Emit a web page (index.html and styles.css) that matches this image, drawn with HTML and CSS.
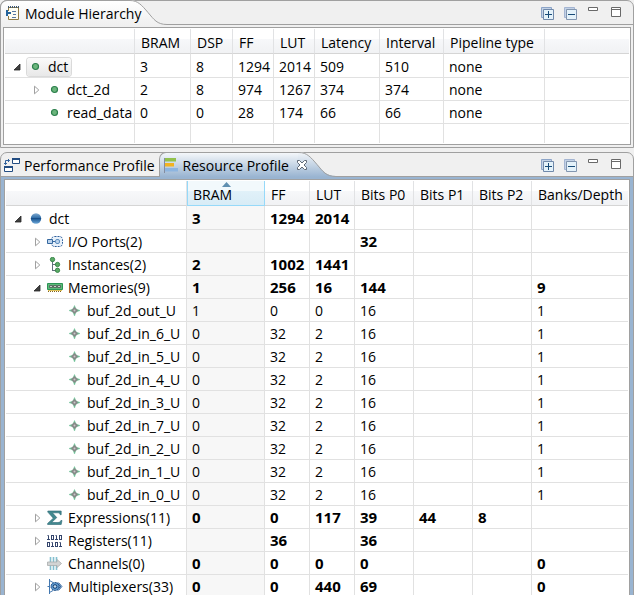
FILE: index.html
```html
<!DOCTYPE html>
<html lang="en">
<head>
<meta charset="utf-8">
<title>Resource Profile</title>
<link rel="stylesheet" href="styles.css">
</head>
<body>
<svg class="sprite" aria-hidden="true">
  <defs>
    <linearGradient id="gTab" x1="0" y1="0" x2="0" y2="1"><stop offset="0" stop-color="#fff"/><stop offset="1" stop-color="#f0f0f0"/></linearGradient>
    <linearGradient id="gActive" x1="0" y1="0" x2="0" y2="1"><stop offset="0" stop-color="#f4f7fa"/><stop offset="1" stop-color="#99b4d1"/></linearGradient>
    <linearGradient id="gBall" x1="0" y1="0" x2="0" y2="1"><stop offset="0" stop-color="#7fa9cf"/><stop offset=".45" stop-color="#2f6ea8"/><stop offset=".55" stop-color="#1f5c98"/><stop offset="1" stop-color="#6fa8d8"/></linearGradient>
  </defs>
  <symbol id="open" viewBox="0 0 16 16"><path d="M9 5v6H3z" fill="#404040" stroke="#262626" stroke-width=".8"/></symbol>
  <symbol id="closed" viewBox="0 0 16 16"><path d="M4.5 4.2v7.6L8.800 8z" fill="#fff" stroke="#a0a0a0"/></symbol>
  <symbol id="dot" viewBox="0 0 16 16"><circle cx="8.500" cy="7.500" r="3" fill="#6bb57c" stroke="#2c7f4c" stroke-width="1.200"/></symbol>
  <symbol id="ball" viewBox="0 0 16 16"><circle cx="8" cy="7.500" r="5.200" fill="url(#gBall)"/><path d="M3 7.500h10" stroke="#184e88"/></symbol>
  <symbol id="io" viewBox="0 0 16 16"><rect x="4.500" y="2.500" width="11" height="10" rx="3" fill="#e8f1fa" stroke="#2f5f9c" stroke-dasharray="2 1"/><path d="M.5 5.500h5v4h-5zM6 7.500h2" fill="#bcd4ee" stroke="#35689f"/><rect x="8.500" y="5.500" width="4" height="4" rx="1.500" fill="#bcd4ee" stroke="#5f8fc0"/></symbol>
  <symbol id="inst" viewBox="0 0 16 16"><path d="M5.500 3v11M5.500 7.500h5M5.500 13.500h5" fill="none" stroke="#62707c"/><g fill="#5bab66" stroke="#2b7a3e" stroke-width=".8"><circle cx="5.500" cy="2.500" r="2.200"/><circle cx="10.500" cy="7.500" r="2.200"/><circle cx="10.500" cy="13.300" r="2.200"/></g></symbol>
  <symbol id="mem" viewBox="0 0 16 16"><path d="M.5 3.500h15v6H.5z" fill="#5cba7a" stroke="#2c9455"/><path d="M2.500 5.500h3v2h-3zM6.500 5.500h3v2h-3zM10.500 5.500h3v2h-3z" fill="#c8ccc9" stroke="#4a5650" stroke-width=".8"/><path d="M1 10.500h14" stroke="#e0c25c"/><path d="M1 11.500h14" stroke="#80641c" stroke-dasharray="1 1"/></symbol>
  <symbol id="spark" viewBox="0 0 16 16"><path d="M8.500 2.500 10 6l4 1.500L10 9l-1.500 4L7 9 3 7.500 7 6z" fill="#6fc096" stroke="#6fc096" stroke-width=".5"/><path d="M8.500 4 12 7.500 8.500 11 5 7.500z" fill="#888"/><circle cx="8.500" cy="7.500" r="1" fill="#c8c8c8"/></symbol>
  <symbol id="sigma" viewBox="0 0 16 16"><path d="M.8 1h13.400v3.700h-1C13 3.400 12 2.800 10.500 2.800H5.400L9.800 7.600 4.600 12.500h6.300c1.700 0 2.500-.7 3-2h1.100l-.8 4H.6v-1.100L6.300 8.200.8 2.100z" fill="#42898f" stroke="#2b6674" stroke-width=".6"/></symbol>
  <symbol id="reg" viewBox="0 0 16 16"><g fill="none" stroke="#34456c"><path d="M.5 2.500h1V7M0 6.500h3M8.500 2.500h1V7M8 6.500h3"/><rect x="4.500" y="2.500" width="2" height="4"/><rect x="12.500" y="2.500" width="2" height="4"/><path d="M4.500 9.500h1V14M4 13.500h3M12.500 9.500h1V14M12 13.500h3"/><rect x=".5" y="9.500" width="2" height="4"/><rect x="8.500" y="9.500" width="2" height="4"/></g></symbol>
  <symbol id="chan" viewBox="0 0 16 16"><path d="M3.500 1v13M6.500 1v13M9.500 1v13" stroke="#84c0d0" stroke-width="1.600"/><path d="M.5 6h9.500V3.500L14.500 7.500 10 11.500V9.500H.5z" fill="#d2d4d4" stroke="#a8acac" stroke-width=".8"/></symbol>
  <symbol id="mux" viewBox="0 0 16 16"><path d="M2.500 0v15M2.500 1.500 6 3.500M2.500 13.500 6 11.500" fill="none" stroke="#4378b0"/><path d="M.5 7.500h2" stroke="#4378b0"/><path d="M10 4h2l3 3.500-3 3.500h-2z" fill="#a9c9e6" stroke="#2f6199" stroke-width=".8"/><circle cx="8" cy="7.500" r="4" fill="#5e97cc" stroke="#1c4c84" stroke-dasharray="2 .6"/><circle cx="8" cy="7.500" r="1.800" fill="#c9deef" stroke="#123d70"/><path d="m12 5.500 1.500 2-1.500 2" fill="none" stroke="#174a85"/></symbol>
  <symbol id="plus" viewBox="0 0 16 16"><path d="M1.500.5h10v10h-10z" fill="#c3d2e6" stroke="#8da5c8"/><path d="M3.500 2.500h10v10h-10z" fill="#e4f2fa" stroke="#7089aa"/><path d="M5 7.500h7M8.500 4v7" stroke="#174b78"/></symbol>
  <symbol id="minus" viewBox="0 0 16 16"><path d="M1.500.5h10v10h-10z" fill="#c3d2e6" stroke="#a4b5d2"/><path d="M3.500 2.500h10v10h-10z" fill="#e4f2fa" stroke="#8296b0"/><path d="M5 7.500h7" stroke="#174b78"/></symbol>
  <symbol id="min" viewBox="0 0 16 16"><path d="M2.500.5h9v3h-9z" fill="#fff" stroke="#696969"/></symbol>
  <symbol id="max" viewBox="0 0 16 16"><path d="M2.500.5h9v9h-9zM2 2.500h10" fill="#fff" stroke="#696969"/></symbol>
  <symbol id="hier" viewBox="0 0 16 16"><path d="M3.500 5V1.500h10v12h-10V10" fill="#fffef2" stroke="#917b42"/><path d="M3.500 0v2M5.500 0v2M7.500 0v2M9.500 0v2M11.500 0v2M13.500 0v2" stroke="#3c5878"/><path d="M7 5.500h4M8 8.500h3M7 11.500h4" stroke="#5878a0"/><path d="M2 4v6M2 7h4" fill="none" stroke="#26649b" stroke-width="2"/></symbol>
  <symbol id="perf" viewBox="0 0 16 16"><path d="M8.500.5h7v5h-7zM.5 8.500h8v5h-8z" fill="#fff" stroke="#234d82"/><path d="M8 1h8M0 9h9" stroke="#234d82" stroke-width="2"/><path d="M1.500 6.500v-4h4M0 5l1.500 1.500L3 5M4 1l1.500 1.500L4 4" fill="none" stroke="#30619c"/></symbol>
  <symbol id="res" viewBox="0 0 16 16"><path d="M.5 0v15" stroke="#848da0"/><path d="M1 0h11v3.500H1z" fill="#92c14c"/><path d="M1 5h9v3.500H1z" fill="#f2b321"/><path d="M1 10h13v3.500H1z" fill="#8db5e0"/></symbol>
  <symbol id="x" viewBox="0 0 16 16"><path d="m3.500 2.500 2 0L8 5l2.500-2.500 2 0 0 2L10 7l2.500 2.500v2h-2L8 9l-2.500 2.500h-2v-2L6 7 3.500 4.500z" fill="#fff" stroke="#5f6976"/></symbol>
</svg>

<section class="panel hierarchy">
  <header class="strip">
    <div class="tabs" role="tablist">
      <button class="tab current" role="tab" aria-selected="true">
        <svg class="curve" viewBox="0 0 40 25"><path d="M0 0h1c8 0 12 5 18 12s9 12 19 12h2v1H0z" fill="url(#gTab)"/><path d="M0 .5h1c8 0 12 5 18 12s9 12 19 12h2" fill="none" stroke="#a0a0a0"/></svg>
        <svg class="icon"><use href="#hier"/></svg><span>Module Hierarchy</span>
      </button>
    </div>
    <div class="tools">
      <button aria-label="Expand all"><svg class="icon"><use href="#plus"/></svg></button>
      <button aria-label="Collapse all"><svg class="icon"><use href="#minus"/></svg></button>
      <button aria-label="Minimize"><svg class="icon"><use href="#min"/></svg></button>
      <button aria-label="Maximize"><svg class="icon"><use href="#max"/></svg></button>
    </div>
  </header>
  <div class="body"><div class="frame">
    <table>
      <colgroup><col class="w130"><col class="w56"><col class="w42"><col class="w41"><col class="w41"><col class="w65"><col class="w64"><col class="w101"><col></colgroup>
      <thead><tr><th></th><th>BRAM</th><th>DSP</th><th>FF</th><th>LUT</th><th>Latency</th><th>Interval</th><th>Pipeline type</th><th></th></tr></thead>
      <tbody>
        <tr><td><div class="node"><button class="twisty" aria-label="Collapse"><svg class="icon"><use href="#open"/></svg></button><span class="item selected"><svg class="icon"><use href="#dot"/></svg>dct</span></div></td><td>3</td><td>8</td><td>1294</td><td>2014</td><td>509</td><td>510</td><td>none</td><td></td></tr>
        <tr><td><div class="node level1"><button class="twisty" aria-label="Expand"><svg class="icon"><use href="#closed"/></svg></button><span class="item"><svg class="icon"><use href="#dot"/></svg>dct_2d</span></div></td><td>2</td><td>8</td><td>974</td><td>1267</td><td>374</td><td>374</td><td>none</td><td></td></tr>
        <tr><td><div class="node level1"><span class="twisty"></span><span class="item"><svg class="icon"><use href="#dot"/></svg>read_data</span></div></td><td>0</td><td>0</td><td>28</td><td>174</td><td>66</td><td>66</td><td>none</td><td></td></tr>
        <tr class="filler"><td></td><td></td><td></td><td></td><td></td><td></td><td></td><td></td><td></td></tr>
      </tbody>
    </table>
  </div></div>
</section>

<section class="panel profile">
  <header class="strip">
    <div class="tabs" role="tablist">
      <button class="tab" role="tab" aria-selected="false"><svg class="icon"><use href="#perf"/></svg><span>Performance Profile</span></button>
      <button class="tab current" role="tab" aria-selected="true">
        <svg class="curve" viewBox="0 0 40 25"><path d="M0 0h1c8 0 12 5 18 12s9 12 19 12h2v1H0z" fill="url(#gActive)"/><path d="M0 .5h1c8 0 12 5 18 12s9 12 19 12h2" fill="none" stroke="#a0a0a0"/></svg>
        <svg class="icon"><use href="#res"/></svg><span>Resource Profile</span><svg class="icon close"><use href="#x"/></svg>
      </button>
    </div>
    <div class="tools">
      <button aria-label="Expand all"><svg class="icon"><use href="#plus"/></svg></button>
      <button aria-label="Collapse all"><svg class="icon"><use href="#minus"/></svg></button>
      <button aria-label="Minimize"><svg class="icon"><use href="#min"/></svg></button>
      <button aria-label="Maximize"><svg class="icon"><use href="#max"/></svg></button>
    </div>
  </header>
  <div class="body"><div class="frame">
    <table>
      <colgroup><col class="w181"><col class="w78"><col class="w45"><col class="w45"><col class="w59"><col class="w59"><col class="w59"><col></colgroup>
      <thead><tr><th></th><th class="sorted" aria-sort="ascending">BRAM<svg class="arrow" viewBox="0 0 9 5"><path d="M0 5 4.500 0 9 5z" fill="#5f8fb0"/></svg></th><th>FF</th><th>LUT</th><th>Bits P0</th><th>Bits P1</th><th>Bits P2</th><th>Banks/Depth</th></tr></thead>
      <tbody>
        <tr class="total"><td><div class="node"><button class="twisty" aria-label="Collapse"><svg class="icon"><use href="#open"/></svg></button><span class="item"><svg class="icon"><use href="#ball"/></svg>dct</span></div></td><td>3</td><td>1294</td><td>2014</td><td></td><td></td><td></td><td></td></tr>
        <tr class="total"><td><div class="node level1"><button class="twisty" aria-label="Expand"><svg class="icon"><use href="#closed"/></svg></button><span class="item"><svg class="icon"><use href="#io"/></svg>I/O Ports(2)</span></div></td><td></td><td></td><td></td><td>32</td><td></td><td></td><td></td></tr>
        <tr class="total"><td><div class="node level1"><button class="twisty" aria-label="Expand"><svg class="icon"><use href="#closed"/></svg></button><span class="item"><svg class="icon"><use href="#inst"/></svg>Instances(2)</span></div></td><td>2</td><td>1002</td><td>1441</td><td></td><td></td><td></td><td></td></tr>
        <tr class="total"><td><div class="node level1"><button class="twisty" aria-label="Collapse"><svg class="icon"><use href="#open"/></svg></button><span class="item"><svg class="icon"><use href="#mem"/></svg>Memories(9)</span></div></td><td>1</td><td>256</td><td>16</td><td>144</td><td></td><td></td><td>9</td></tr>
        <tr><td><div class="node level2"><span class="twisty"></span><span class="item"><svg class="icon"><use href="#spark"/></svg>buf_2d_out_U</span></div></td><td>1</td><td>0</td><td>0</td><td>16</td><td></td><td></td><td>1</td></tr>
        <tr><td><div class="node level2"><span class="twisty"></span><span class="item"><svg class="icon"><use href="#spark"/></svg>buf_2d_in_6_U</span></div></td><td>0</td><td>32</td><td>2</td><td>16</td><td></td><td></td><td>1</td></tr>
        <tr><td><div class="node level2"><span class="twisty"></span><span class="item"><svg class="icon"><use href="#spark"/></svg>buf_2d_in_5_U</span></div></td><td>0</td><td>32</td><td>2</td><td>16</td><td></td><td></td><td>1</td></tr>
        <tr><td><div class="node level2"><span class="twisty"></span><span class="item"><svg class="icon"><use href="#spark"/></svg>buf_2d_in_4_U</span></div></td><td>0</td><td>32</td><td>2</td><td>16</td><td></td><td></td><td>1</td></tr>
        <tr><td><div class="node level2"><span class="twisty"></span><span class="item"><svg class="icon"><use href="#spark"/></svg>buf_2d_in_3_U</span></div></td><td>0</td><td>32</td><td>2</td><td>16</td><td></td><td></td><td>1</td></tr>
        <tr><td><div class="node level2"><span class="twisty"></span><span class="item"><svg class="icon"><use href="#spark"/></svg>buf_2d_in_7_U</span></div></td><td>0</td><td>32</td><td>2</td><td>16</td><td></td><td></td><td>1</td></tr>
        <tr><td><div class="node level2"><span class="twisty"></span><span class="item"><svg class="icon"><use href="#spark"/></svg>buf_2d_in_2_U</span></div></td><td>0</td><td>32</td><td>2</td><td>16</td><td></td><td></td><td>1</td></tr>
        <tr><td><div class="node level2"><span class="twisty"></span><span class="item"><svg class="icon"><use href="#spark"/></svg>buf_2d_in_1_U</span></div></td><td>0</td><td>32</td><td>2</td><td>16</td><td></td><td></td><td>1</td></tr>
        <tr><td><div class="node level2"><span class="twisty"></span><span class="item"><svg class="icon"><use href="#spark"/></svg>buf_2d_in_0_U</span></div></td><td>0</td><td>32</td><td>2</td><td>16</td><td></td><td></td><td>1</td></tr>
        <tr class="total"><td><div class="node level1"><button class="twisty" aria-label="Expand"><svg class="icon"><use href="#closed"/></svg></button><span class="item"><svg class="icon"><use href="#sigma"/></svg>Expressions(11)</span></div></td><td>0</td><td>0</td><td>117</td><td>39</td><td>44</td><td>8</td><td></td></tr>
        <tr class="total"><td><div class="node level1"><button class="twisty" aria-label="Expand"><svg class="icon"><use href="#closed"/></svg></button><span class="item"><svg class="icon"><use href="#reg"/></svg>Registers(11)</span></div></td><td></td><td>36</td><td></td><td>36</td><td></td><td></td><td></td></tr>
        <tr class="total"><td><div class="node level1"><span class="twisty"></span><span class="item"><svg class="icon"><use href="#chan"/></svg>Channels(0)</span></div></td><td>0</td><td>0</td><td>0</td><td>0</td><td></td><td></td><td>0</td></tr>
        <tr class="total"><td><div class="node level1"><button class="twisty" aria-label="Expand"><svg class="icon"><use href="#closed"/></svg></button><span class="item"><svg class="icon"><use href="#mux"/></svg>Multiplexers(33)</span></div></td><td>0</td><td>0</td><td>440</td><td>69</td><td></td><td></td><td>0</td></tr>
      </tbody>
    </table>
  </div></div>
</section>
</body>
</html>
```
FILE: styles.css
```css
* { box-sizing: border-box; }

body {
  display: flex;
  flex-direction: column;
  gap: 4px;
  height: 100vh;
  margin: 0;
  overflow: hidden;
  background: #f0f0f0;
  color: #000;
  font: 14px/18px "Open Sans", "Noto Sans", sans-serif;
}

button {
  margin: 0;
  padding: 0;
  border: 0;
  background: none;
  color: inherit;
  font: inherit;
}

.sprite { position: absolute; width: 0; height: 0; }
.icon { display: block; flex: none; width: 16px; height: 16px; }

/* Panels */
.panel {
  flex: none;
  border: 1px solid #a0a0a0;
  border-radius: 7px 7px 0 0;
  background: #f0f0f0;
}
.strip {
  display: flex;
  justify-content: space-between;
  height: 24px;
  border-bottom: 1px solid #a0a0a0;
}
.tabs { display: flex; margin: -1px 0 -1px -1px; }
.tab {
  position: relative;
  display: flex;
  align-items: center;
  gap: 4px;
  height: 25px;
  padding: 2px 4px 0;
  white-space: nowrap;
}
.tab span, .tab > .icon { position: relative; }
.tab.current {
  padding-right: 28px;
  border-left: 1px solid #a0a0a0;
  border-top: 1px solid #a0a0a0;
  border-radius: 7px 0 0 0;
  background: linear-gradient(#fff, #f0f0f0) no-repeat 0 0 / calc(100% - 39px) 100%;
}
.profile .tab.current {
  gap: 3px;
  background-image: linear-gradient(#f4f7fa, #99b4d1);
}
.tab .curve { position: absolute; top: -1px; right: 0; width: 40px; height: 25px; }
.tab .close { margin-left: 2px; }
.tools {
  display: flex;
  gap: 7px;
  padding: 5px 8px 0 0;
}
.body { padding: 2px; }
.profile .body { padding: 2px 3px; background: #99b4d1; }
.frame { padding: 1px; border: 1px solid #a0a0a0; background: #fff; }

/* Tables */
table {
  width: 100%;
  border-collapse: separate;
  border-spacing: 0;
  table-layout: fixed;
}
.w130 { width: 130px; }
.w56 { width: 56px; }
.w42 { width: 42px; }
.w41 { width: 41px; }
.w65 { width: 65px; }
.w64 { width: 64px; }
.w101 { width: 101px; }
.w181 { width: 181px; }
.w78 { width: 78px; }
.w45 { width: 45px; }
.w59 { width: 59px; }

th {
  position: relative;
  height: 25px;
  padding: 4px 0 0 6px;
  border-right: 1px solid #e1e2e4;
  border-bottom: 1px solid #d5d5d5;
  background: linear-gradient(#fff 40%, #f7f8fa 40%, #f1f2f4);
  font-weight: 400;
  text-align: left;
  white-space: nowrap;
}
th.sorted {
  border-color: #96d9f9;
  border-left: 1px solid #96d9f9;
  padding-left: 5px;
  background: linear-gradient(#f2f9fc 40%, #e1f1f9 40%, #d8ecf6);
}
.arrow { position: absolute; top: 1px; left: 34px; width: 9px; height: 5px; }
td {
  height: 23px;
  padding: 2px 0 0 5px;
  border-right: 1px solid #e1e1e1;
  border-bottom: 1px solid #e1e1e1;
  white-space: nowrap;
}
td:first-child { padding-left: 0; }
tr > :last-child { border-right: 0; }
tbody tr:first-child td { height: 24px; }
.filler td { height: 19px; padding: 0; border-bottom: 0; }
.profile td:nth-child(2) { background: #f7f7f7; }
.total td + td { padding-top: 0; font-size: 15px; font-weight: 700; }

/* Tree column */
.node { display: flex; align-items: center; padding-left: 6px; }
.level1 { padding-left: 25px; }
.level2 { padding-left: 44px; }
.twisty { flex: none; width: 16px; }
.item { display: flex; align-items: center; gap: 5px; }
.selected {
  padding-right: 3px;
  border-radius: 3px;
  background: linear-gradient(#fafafa, #e8e8e8);
  box-shadow: 0 0 0 1px #dadada;
}
```
